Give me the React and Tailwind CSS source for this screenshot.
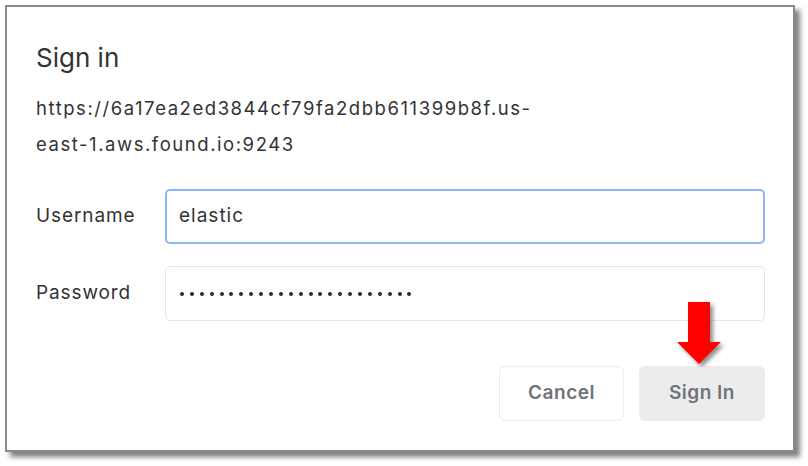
import React from 'react';

const font = { fontFamily: 'Inter, "Liberation Sans", sans-serif' };

// Red annotation arrow pointing at the Sign In button
const Arrow = () => (
  <svg
    width="56"
    height="72"
    viewBox="0 0 56 72"
    className="absolute left-[671px] top-[290px]"
  >
    <defs>
      <filter id="arrowShadow" x="-30%" y="-30%" width="160%" height="160%">
        <feDropShadow dx="3" dy="3" stdDeviation="2" floodColor="#000" floodOpacity="0.45" />
      </filter>
    </defs>
    <path d="M17 7 H39 V47 H50 L28 69 L6 47 H17 Z" fill="#ff0000" filter="url(#arrowShadow)" />
  </svg>
);

const Field = ({ label, children, focused }) => (
  <div className="flex items-center">
    <label className="w-[129px] text-[19px] tracking-[0.9px] text-[#333]">{label}</label>
    <div
      className={`flex items-center h-[55px] w-[600px] rounded-[5px] px-[12px] text-[19px] tracking-[1px] text-[#333] ${
        focused ? 'border-2 border-[#8db6f7]' : 'border border-[#e6e6e6]'
      }`}
    >
      {children}
    </div>
  </div>
);

export default function App() {
  return (
    <div className="relative w-[808px] h-[466px] bg-white" style={font}>
      <div className="ml-[5px] mt-[5px] w-[790px] h-[447px] border-2 border-[#8a8a8a] bg-white shadow-[5px_5px_5px_rgba(0,0,0,0.5)] pl-[29px] pr-[28px] pt-[33px]">
        <h1 className="text-[26px] leading-[36px] text-[#333]">Sign in</h1>
        <p className="mt-[14px] text-[18.5px] leading-[36px] tracking-[1.55px] text-[#333]">
          https://6a17ea2ed3844cf79fa2dbb611399b8f.us-
          <br />
          east-1.aws.found.io:9243
        </p>

        <div className="mt-[27px] flex flex-col gap-[22px]">
          <Field label="Username" focused>
            elastic
          </Field>
          <Field label="Password">
            <div className="flex gap-[5.9px] pl-[2px]">
              {Array.from({ length: 24 }).map((_, i) => (
                <span key={i} className="h-[4px] w-[4px] rounded-full bg-[#2a2a2a]" />
              ))}
            </div>
          </Field>
        </div>

        <div className="mt-[45px] flex justify-end gap-[15px]">
          <button className="h-[55px] w-[125px] rounded-[6px] border border-[#ececec] bg-white text-[19px] font-semibold tracking-[0.5px] text-[#707378]">
            Cancel
          </button>
          <button className="h-[55px] w-[126px] rounded-[6px] bg-[#ececec] text-[19px] font-semibold tracking-[0.5px] text-[#707378]">
            Sign In
          </button>
        </div>
      </div>
      <Arrow />
    </div>
  );
}
